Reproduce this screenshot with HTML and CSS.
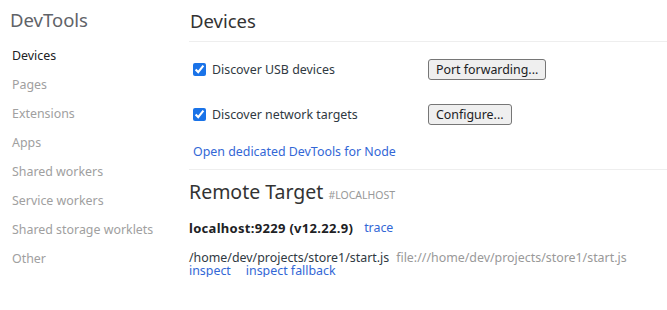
FILE: index.html
```html
<!DOCTYPE html>
<html>
<head>
<meta charset="utf-8">
<link rel="stylesheet" href="styles.css">
</head>
<body>
<div class="page">
  <nav class="sidebar">
    <h1 class="brand">DevTools</h1>
    <ul class="nav">
      <li class="nav-item active">Devices</li>
      <li class="nav-item">Pages</li>
      <li class="nav-item">Extensions</li>
      <li class="nav-item">Apps</li>
      <li class="nav-item">Shared workers</li>
      <li class="nav-item">Service workers</li>
      <li class="nav-item">Shared storage worklets</li>
      <li class="nav-item">Other</li>
    </ul>
  </nav>
  <main class="content">
    <h2 class="section-title">Devices</h2>
    <div class="options">
      <div class="option-row">
        <label class="check"><input type="checkbox" checked><span>Discover USB devices</span></label>
        <button class="btn">Port forwarding...</button>
      </div>
      <div class="option-row">
        <label class="check"><input type="checkbox" checked><span>Discover network targets</span></label>
        <button class="btn">Configure...</button>
      </div>
      <a class="link node-link">Open dedicated DevTools for Node</a>
    </div>
    <div class="remote">
      <h3 class="remote-title">Remote Target <span class="tag">#LOCALHOST</span></h3>
      <div class="target-head"><span class="target-name">localhost:9229 (v12.22.9)</span><a class="link">trace</a></div>
      <div class="target">
        <div class="target-line"><span class="path">/home/dev/projects/store1/start.js</span><span class="url">file:///home/dev/projects/store1/start.js</span></div>
        <div class="actions"><a class="link">inspect</a><a class="link">inspect fallback</a></div>
      </div>
    </div>
  </main>
</div>
</body>
</html>
```

FILE: styles.css
```css
* { box-sizing: border-box; }
html, body { margin: 0; padding: 0; background: #fff; }
body {
  font-family: "Noto Sans", "Open Sans", sans-serif;
  font-size: 12.4px;
  color: #303942;
}
.page { display: flex; }
.sidebar { width: 189px; flex: none; padding: 8px 0 0 10px; }
.brand {
  margin: 0;
  font-size: 18.5px;
  font-weight: normal;
  color: #5f6368;
  line-height: 24px;
}
.nav { list-style: none; margin: 9px 0 0; padding: 0 0 0 2px; }
.nav-item { line-height: 29px; color: #a0a0a0; white-space: nowrap; }
.nav-item.active { color: #202124; }
.content { flex: 1; min-width: 0; padding-top: 9px; }
.section-title {
  margin: 0 0 0 1px;
  font-size: 18.5px;
  font-weight: normal;
  color: #333;
  line-height: 24px;
  padding-bottom: 8px;
}
.options {
  border-top: 1px solid #eeeeee;
  border-bottom: 1px solid #eeeeee;
  padding: 17px 0 9px 4px;
  display: flex;
  flex-direction: column;
}
.option-row { display: flex; align-items: center; height: 21px; margin-bottom: 24px; }
.option-row + .option-row { margin-bottom: 19px; }
.check { display: flex; align-items: center; width: 235px; }
.check input { margin: 0 6px 0 0; width: 13px; height: 13px; accent-color: #1a73e8; }
.btn {
  font-family: inherit;
  font-size: 12.4px;
  color: #202124;
  background: #efefef;
  border: 1px solid #767676;
  border-radius: 3px;
  padding: 0 7px;
  height: 21px;
  line-height: 18px;
}
.link { color: #3367d6; cursor: pointer; }
.node-link { line-height: 16px; }
.remote { padding-top: 9px; }
.remote-title {
  margin: 0;
  font-size: 19.5px;
  font-weight: normal;
  color: #333;
  line-height: 26px;
}
.tag { font-size: 10.5px; color: #999; }
.target-head { margin-top: 12px; display: flex; gap: 11px; line-height: 16px; }
.target-name { font-weight: bold; color: #202124; font-size: 13px; letter-spacing: 0.3px; }
.target { margin-top: 15px; line-height: 13px; }
.target-line { display: flex; gap: 7px; }
.url { color: #999; }
.actions { display: flex; gap: 15px; }
```
